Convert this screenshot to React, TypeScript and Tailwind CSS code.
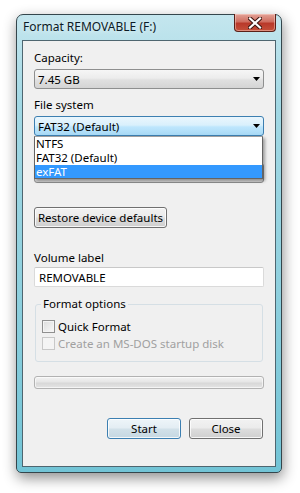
import React from "react";

const font = "font-['Segoe_UI','Noto_Sans',sans-serif]";

function Arrow() {
  return (
    <svg width="7" height="4" viewBox="0 0 7 4" className="shrink-0">
      <path d="M0 0H7L3.5 4Z" fill="#000" />
    </svg>
  );
}

function Combo({ value, focused }: { value: string; focused?: boolean }) {
  return (
    <div
      className={`h-[20px] rounded-[3px] border flex items-center justify-between pl-[3px] pr-[3px] ${
        focused
          ? "border-[#3c7fb1] bg-[linear-gradient(to_bottom,#eaf6fd_0%,#d9f0fc_45%,#bee6fd_55%,#a7d9f5_100%)]"
          : "border-[#8e8f8f] bg-[linear-gradient(to_bottom,#f6f6f6_0%,#ececec_45%,#e0e0e0_55%,#d4d4d4_100%)]"
      }`}
    >
      <span className="leading-[15px]">{value}</span>
      <Arrow />
    </div>
  );
}

function Button({ label, def, width }: { label: string; def?: boolean; width: string }) {
  return (
    <div
      className={`${width} h-[21px] rounded-[3px] border flex items-center justify-center shadow-[inset_0_0_0_1px_rgba(255,255,255,0.8)] ${
        def
          ? "border-[#3c7fb1] bg-[linear-gradient(to_bottom,#eef5f9_0%,#e3edf3_48%,#d2e1e9_52%,#c6d8e2_100%)]"
          : "border-[#707070] bg-[linear-gradient(to_bottom,#f2f2f2_0%,#ebebeb_48%,#dddddd_52%,#cfcfcf_100%)]"
      }`}
    >
      {label}
    </div>
  );
}

function Check({ label, disabled }: { label: string; disabled?: boolean }) {
  return (
    <div className="flex items-center h-[16px]">
      <div
        className={`w-[13px] h-[13px] border ${
          disabled
            ? "border-[#c8c8c8] bg-[#f4f4f4]"
            : "border-[#8f8f8f] bg-[linear-gradient(135deg,#dcdcdc,#f8f8f8)] shadow-[inset_0_0_0_1px_#f4f4f4]"
        }`}
      />
      <span className={`ml-[3px] leading-[15px] ${disabled ? "text-[#a0a0a0]" : ""}`}>{label}</span>
    </div>
  );
}

export default function App() {
  return (
    <div className={`w-[300px] h-[493px] bg-white pt-[14px] pl-[16px] text-[11.5px] text-black ${font}`}>
      <div className="w-[266px] h-[459px] rounded-t-[7px] rounded-b-[5px] border border-[#34464c] bg-[linear-gradient(to_bottom,#c4e6ee_0%,#a2d8e4_20%,#8fd0de_60%,#72c4d6_100%)] shadow-[1px_5px_14px_rgba(0,0,0,0.45)] flex flex-col pl-[5px] pr-[5px] pb-[5px]">
        <div className="h-[25px] flex items-start justify-between">
          <span className="pl-[1px] pt-[4px] leading-[16px] text-[12px] text-[#0c1b26] [text-shadow:0_0_6px_rgba(255,255,255,0.95)]">
            Format REMOVABLE (F:)
          </span>
          <div className="w-[42px] h-[18px] -mt-[1px] rounded-b-[4px] border border-t-0 border-[#5a2018] bg-[linear-gradient(to_bottom,#e3a398_0%,#cf6e60_45%,#b9392a_55%,#c4503a_100%)] shadow-[inset_0_0_0_1px_rgba(255,220,210,0.45)] flex items-center justify-center">
            <svg width="14" height="12" viewBox="0 0 14 12">
              <path d="M2 1.5L12 10.5M12 1.5L2 10.5" stroke="#3b1510" strokeWidth="4.2" strokeLinecap="square" />
              <path d="M2 1.5L12 10.5M12 1.5L2 10.5" stroke="#fff" strokeWidth="2.2" strokeLinecap="square" />
            </svg>
          </div>
        </div>
        <div className="flex-1 bg-[#f0f0f0] border border-[#4e6670] px-[11px] pt-[9px] flex flex-col">
          <div className="leading-[15px] h-[15px]">Capacity:</div>
          <div className="mt-[4px]">
            <Combo value="7.45 GB" />
          </div>
          <div className="mt-[8px] leading-[15px] h-[15px]">File system</div>
          <div className="mt-[4px] relative z-10">
            <Combo value="FAT32 (Default)" focused />
            <div className="absolute left-0 top-[20px] w-[229px] h-[43px] bg-white border border-[#646464] border-t-[#a0a0a0] shadow-[2px_2px_3px_rgba(0,0,0,0.35)] flex flex-col">
              <div className="h-[14px] leading-[14px] pl-[1px]">NTFS</div>
              <div className="h-[14px] leading-[14px] pl-[1px]">FAT32 (Default)</div>
              <div className="h-[13px] leading-[13px] pl-[1px] bg-[#3399ff] text-white">exFAT</div>
            </div>
          </div>
          {/* allocation unit size row, hidden under the open list */}
          <div className="mt-[8px] h-[15px]" />
          <div className="mt-[4px]">
            <Combo value="" />
          </div>
          <div className="mt-[24px] flex">
            <Button label="Restore device defaults" width="w-[133px]" />
          </div>
          <div className="mt-[22px] leading-[15px] h-[15px]">Volume label</div>
          <div className="mt-[2px] h-[20px] bg-white border border-[#dadada] border-t-[#c8c8c8] rounded-[2px] flex items-center pl-[4px] leading-[15px]">
            REMOVABLE
          </div>
          <div className="mt-[17px] ml-[1px] w-[228px] h-[58px] border border-[#d5dfe5] rounded-[3px] relative px-[6px] pt-[13px] flex flex-col gap-[1px]">
            <span className="absolute -top-[9px] left-[5px] px-[2px] bg-[#f0f0f0] leading-[15px]">Format options</span>
            <Check label="Quick Format" />
            <Check label="Create an MS-DOS startup disk" disabled />
          </div>
          <div className="mt-[14px] h-[13px] rounded-[3px] border border-[#b2b2b2] bg-[linear-gradient(to_bottom,#f3f3f3_0%,#e6e6e6_45%,#d8d8d8_55%,#e4e4e4_100%)] shadow-[inset_0_0_0_1px_rgba(255,255,255,0.6)]" />
          <div className="mt-[29px] flex justify-end gap-[8px] pr-[1px]">
            <Button label="Start" def width="w-[74px]" />
            <Button label="Close" width="w-[74px]" />
          </div>
        </div>
      </div>
    </div>
  );
}
